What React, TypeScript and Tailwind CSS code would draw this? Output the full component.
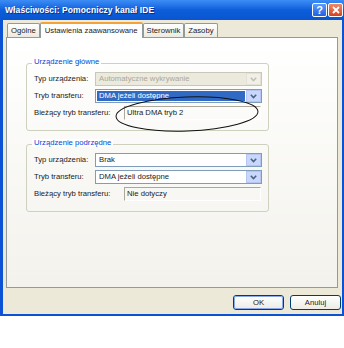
import React from "react";

const Arrow = ({ disabled }: { disabled?: boolean }) => (
  <svg width="7" height="5" viewBox="0 0 7 5">
    <path d="M0.8 0.8 L3.5 3.5 L6.2 0.8" fill="none" stroke={disabled ? "#c3c1b6" : "#4d6185"} strokeWidth="1.6" />
  </svg>
);

type ComboProps = { value: string; disabled?: boolean; selected?: boolean };

const Combo = ({ value, disabled, selected }: ComboProps) => (
  <div
    className={
      "w-[167px] h-[14px] flex border " +
      (disabled ? "border-[#c9c7ba] bg-[#ebeadd]" : "border-[#7f9db9] bg-white")
    }
  >
    <div className="flex-1 p-px">
      <div
        className={
          "h-full flex items-center px-[2px] leading-none " +
          (selected ? "bg-[#316ac5] text-white" : disabled ? "text-[#aca899]" : "text-[#1a1a1a]")
        }
      >
        {value}
      </div>
    </div>
    <div
      className={
        "w-[15px] h-full flex items-center justify-center border " +
        (disabled ? "bg-[#f1efe6] border-[#e4e2d7]" : "bg-[#c8d7fb] border-[#b5c7f0]")
      }
    >
      <Arrow disabled={disabled} />
    </div>
  </div>
);

const Field = ({ value }: { value: string }) => (
  <div className="w-[137px] h-[14px] flex items-center px-[2px] border-t border-l border-[#aca899] border-b border-r border-b-white border-r-white leading-none">
    {value}
  </div>
);

type Row = { label: string; value: string; kind: "combo" | "field"; disabled?: boolean; selected?: boolean };

const Group = ({ title, rows }: { title: string; rows: Row[] }) => (
  <div className="relative w-[243px] h-[68px] border border-[#d0d0bf] rounded-[3px] pt-[8px] pl-[7px] flex flex-col gap-[3px]">
    <span className="absolute -top-[6px] left-[5px] px-[2px] bg-white text-[#0046d5] leading-none">{title}</span>
    {rows.map((r) => (
      <div key={r.label} className="flex items-center h-[14px]">
        <span className={(r.kind === "field" ? "w-[90px]" : "w-[61px]") + " leading-none"}>{r.label}</span>
        {r.kind === "combo" ? (
          <Combo value={r.value} disabled={r.disabled} selected={r.selected} />
        ) : (
          <Field value={r.value} />
        )}
      </div>
    ))}
  </div>
);

const XpButton = ({ label, focused }: { label: string; focused?: boolean }) => (
  <div className="w-[51px] h-[15px] rounded-[3px] border border-[#003c74] bg-linear-to-b from-white to-[#ecebe6] flex items-center justify-center">
    <div
      className={
        "w-full h-full rounded-[2px] flex items-center justify-center leading-none " +
        (focused ? "border border-[#8aa8ea]" : "")
      }
    >
      {label}
    </div>
  </div>
);

export default function App() {
  const tabs = ["Ogólne", "Ustawienia zaawansowane", "Sterownik", "Zasoby"];

  return (
    <div className="relative w-[344px] h-[348px] bg-white text-[7.7px] text-[#1a1a1a] font-['Liberation_Sans',Arial,sans-serif]">
      <div className="w-[344px] h-[316px] flex flex-col">
        {/* title bar */}
        <div className="h-[20px] flex items-center justify-between pl-[5px] pr-[1px] bg-linear-to-b from-[#3d8df5] via-[#0c5edb] to-[#0a55cf]">
          <span className="text-white font-bold text-[8.5px] tracking-[0.1px] [text-shadow:1px_1px_0_#0a2f8a]">
            Właściwości: Pomocniczy kanał IDE
          </span>
          <div className="flex gap-[1px]">
            <div className="w-[15px] h-[14px] rounded-[2px] border border-white bg-linear-to-b from-[#5b9bff] to-[#2260e0] text-white font-bold text-[11px] leading-none flex items-center justify-center">
              ?
            </div>
            <div className="w-[15px] h-[14px] rounded-[2px] border border-white bg-linear-to-b from-[#ed8a6a] to-[#d4401c] flex items-center justify-center">
              <svg width="8" height="8" viewBox="0 0 8 8">
                <path d="M1 1 L7 7 M7 1 L1 7" stroke="white" strokeWidth="1.8" />
              </svg>
            </div>
          </div>
        </div>

        {/* body */}
        <div className="flex-1 flex flex-col bg-[#ece9d8] border-l-[3px] border-r-[2px] border-b-[2px] border-[#0b52d4] pl-[3px] pr-[1px] pt-[2px]">
          <div className="flex items-end h-[16px] -mb-px pl-[1px] relative z-10">
            {tabs.map((t, i) =>
              i === 1 ? (
                <div
                  key={t}
                  className="h-[16px] px-[4px] flex items-center bg-white border-x border-[#919b9c] border-t-2 border-t-[#f2a43a] rounded-t-[2px] leading-none"
                >
                  {t}
                </div>
              ) : (
                <div
                  key={t}
                  className="h-[14px] mb-px px-[3px] flex items-center bg-linear-to-b from-white to-[#eceae0] border border-b-0 border-[#919b9c] rounded-t-[2px] leading-none"
                >
                  {t}
                </div>
              )
            )}
          </div>

          <div className="h-[251px] mr-[3px] border border-[#919b9c] bg-linear-to-b from-white to-[#f3f2ec] pl-[19px] pt-[25px] flex flex-col gap-[13px]">
            <Group
              title="Urządzenie główne"
              rows={[
                { label: "Typ urządzenia:", value: "Automatyczne wykrywanie", kind: "combo", disabled: true },
                { label: "Tryb transferu:", value: "DMA jeżeli dostępne", kind: "combo", selected: true },
                { label: "Bieżący tryb transferu:", value: "Ultra DMA tryb 2", kind: "field" },
              ]}
            />
            <Group
              title="Urządzenie podrzędne"
              rows={[
                { label: "Typ urządzenia:", value: "Brak", kind: "combo" },
                { label: "Tryb transferu:", value: "DMA jeżeli dostępne", kind: "combo" },
                { label: "Bieżący tryb transferu:", value: "Nie dotyczy", kind: "field" },
              ]}
            />
          </div>

          <div className="flex justify-end gap-[6px] mt-[7px]">
            <XpButton label="OK" focused />
            <XpButton label="Anuluj" />
          </div>
        </div>
      </div>

      {/* hand drawn ellipse */}
      <svg className="absolute left-[110px] top-[93px] pointer-events-none" width="154" height="44" viewBox="0 0 154 44">
        <ellipse cx="77" cy="21" rx="71" ry="17" fill="none" stroke="#111" strokeWidth="1" transform="rotate(-2 77 21)" />
      </svg>
    </div>
  );
}
